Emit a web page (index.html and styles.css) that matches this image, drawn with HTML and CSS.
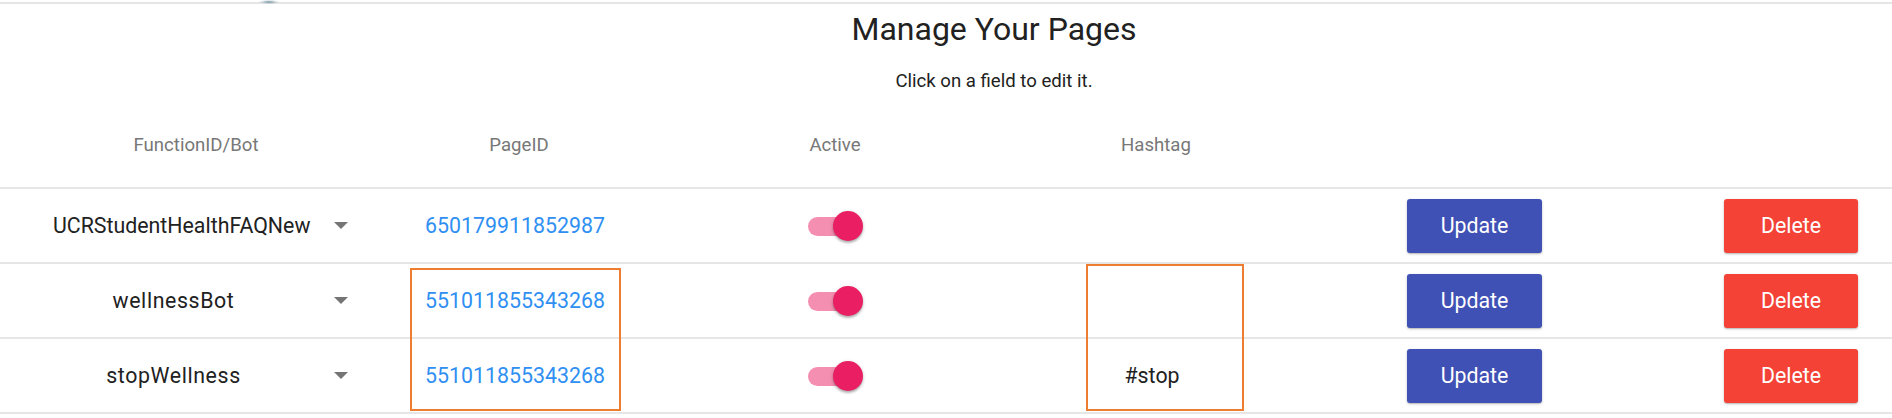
FILE: index.html
```html
<!DOCTYPE html>
<html lang="en">
<head>
<meta charset="utf-8">
<title>Manage Your Pages</title>
<link rel="stylesheet" href="styles.css">
</head>
<body>
<div class="page">
  <div class="topbar"><span class="blob"></span></div>
  <div class="intro">
    <h1 class="title">Manage Your Pages</h1>
    <p class="subtitle">Click on a field to edit it.</p>
  </div>
  <div class="table">
    <div class="row head">
      <div class="cell c1"><span class="hd">FunctionID/Bot</span></div>
      <div class="cell c2"><span class="hd">PageID</span></div>
      <div class="cell c3"><span class="hd">Active</span></div>
      <div class="cell c4"><span class="hd">Hashtag</span></div>
      <div class="cell c5"></div>
      <div class="cell c6"></div>
    </div>
    <div class="row">
      <div class="cell c1"><span class="sel">UCRStudentHealthFAQNew</span><span class="arrow"></span></div>
      <div class="cell c2"><span class="pid">650179911852987</span></div>
      <div class="cell c3"><span class="toggle"><span class="track"></span><span class="thumb"></span></span></div>
      <div class="cell c4"></div>
      <div class="cell c5"><button class="btn update">Update</button></div>
      <div class="cell c6"><button class="btn delete">Delete</button></div>
    </div>
    <div class="row">
      <div class="cell c1"><span class="sel wide">wellnessBot</span><span class="arrow"></span></div>
      <div class="cell c2"><span class="pid">551011855343268</span></div>
      <div class="cell c3"><span class="toggle"><span class="track"></span><span class="thumb"></span></span></div>
      <div class="cell c4"></div>
      <div class="cell c5"><button class="btn update">Update</button></div>
      <div class="cell c6"><button class="btn delete">Delete</button></div>
    </div>
    <div class="row">
      <div class="cell c1"><span class="sel wide">stopWellness</span><span class="arrow"></span></div>
      <div class="cell c2"><span class="pid">551011855343268</span></div>
      <div class="cell c3"><span class="toggle"><span class="track"></span><span class="thumb"></span></span></div>
      <div class="cell c4"><span class="tag">#stop</span></div>
      <div class="cell c5"><button class="btn update">Update</button></div>
      <div class="cell c6"><button class="btn delete">Delete</button></div>
    </div>
  </div>
  <div class="mark mark-page"></div>
  <div class="mark mark-tag"></div>
</div>
</body>
</html>
```

FILE: styles.css
```css
html, body {
  margin: 0;
  padding: 0;
  background: #ffffff;
}

body {
  font-family: Roboto, "Liberation Sans", Arial, sans-serif;
  color: #212121;
}

.page {
  position: relative;
  width: 1892px;
  height: 418px;
  overflow: hidden;
}

.topbar {
  height: 2px;
  border-bottom: 2px solid #e6e6e6;
}

.blob {
  position: absolute;
  left: 259px;
  top: 0;
  width: 20px;
  height: 4px;
  background: radial-gradient(ellipse at center, rgba(90, 130, 150, 0.85) 0%, rgba(150, 170, 180, 0.4) 45%, rgba(255, 255, 255, 0) 75%);
}

.intro {
  padding-left: 96px;
}

.title {
  margin: 5px 0 0;
  font-size: 32px;
  line-height: 40px;
  font-weight: 400;
  text-align: center;
  color: #212121;
}

.subtitle {
  margin: 20px 0 0;
  font-size: 18.6px;
  line-height: 24px;
  text-align: center;
  color: #212121;
}

.row {
  display: grid;
  grid-template-columns: 356px 326px 306px 336px 301px 1fr;
  height: 73px;
  border-bottom: 2px solid #e6e6e6;
}

.row.head {
  height: 24px;
  padding: 40px 0 30px;
}

.cell {
  display: flex;
  align-items: center;
  justify-content: center;
  min-width: 0;
}

.cell.c1 {
  padding-left: 36px;
}

.row:not(.head) .cell.c1 {
  justify-content: flex-start;
}

.cell.c6 {
  justify-content: flex-end;
  padding-right: 34px;
}

.hd {
  font-size: 18.6px;
  line-height: 24px;
  color: #777777;
  white-space: nowrap;
}

.sel {
  display: block;
  width: 241px;
  min-width: 0;
  flex: 0 0 241px;
  margin-left: 17px;
  font-size: 21.33px;
  line-height: 28px;
  text-align: center;
  white-space: nowrap;
  color: #212121;
}

.sel.wide {
  letter-spacing: 0.6px;
}

.arrow {
  flex: 0 0 auto;
  width: 0;
  height: 0;
  margin-left: 40px;
  border-left: 7px solid transparent;
  border-right: 7px solid transparent;
  border-top: 7px solid #757575;
}

.pid {
  font-size: 21.33px;
  line-height: 28px;
  color: #2f8ff2;
  white-space: nowrap;
  margin-right: 8px;
}

.tag {
  font-size: 21.33px;
  line-height: 28px;
  color: #212121;
  margin-left: -8px;
}

.toggle {
  position: relative;
  display: block;
  width: 55px;
  height: 30px;
}

.track {
  position: absolute;
  left: 0;
  top: 6px;
  width: 51px;
  height: 19px;
  border-radius: 10px;
  background: #f48fb1;
}

.thumb {
  position: absolute;
  right: 0;
  top: 0;
  width: 30px;
  height: 30px;
  border-radius: 50%;
  background: #e91e63;
  box-shadow: 0 2px 2px rgba(0, 0, 0, 0.22), 0 1px 4px rgba(0, 0, 0, 0.16);
}

.btn {
  height: 54px;
  border: none;
  border-radius: 3px;
  font-family: Roboto, "Liberation Sans", Arial, sans-serif;
  font-size: 21.33px;
  font-weight: 400;
  color: #ffffff;
  padding: 0;
  box-shadow: 0 1px 3px rgba(0, 0, 0, 0.2), 0 1px 1px rgba(0, 0, 0, 0.12);
}

.btn.update {
  width: 135px;
  background: #3f51b5;
}

.btn.delete {
  width: 134px;
  background: #f44336;
}

.mark {
  position: absolute;
  box-sizing: border-box;
  border: 2px solid #ed7d31;
}

.mark-page {
  left: 410px;
  top: 268px;
  width: 211px;
  height: 143px;
}

.mark-tag {
  left: 1086px;
  top: 264px;
  width: 158px;
  height: 147px;
}
```
